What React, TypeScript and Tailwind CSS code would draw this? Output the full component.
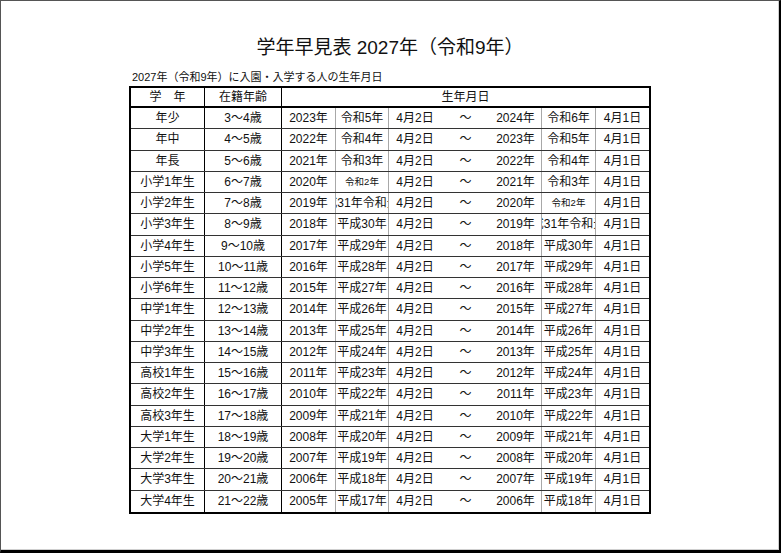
import React from "react";

type Row = {
  grade: string;
  age: string;
  fromYear: string;
  fromEra: string;
  toYear: string;
  toEra: string;
};

const rows: Row[] = [
  { grade: "年少", age: "3～4歳", fromYear: "2023年", fromEra: "令和5年", toYear: "2024年", toEra: "令和6年" },
  { grade: "年中", age: "4～5歳", fromYear: "2022年", fromEra: "令和4年", toYear: "2023年", toEra: "令和5年" },
  { grade: "年長", age: "5～6歳", fromYear: "2021年", fromEra: "令和3年", toYear: "2022年", toEra: "令和4年" },
  { grade: "小学1年生", age: "6～7歳", fromYear: "2020年", fromEra: "令和2年", toYear: "2021年", toEra: "令和3年" },
  { grade: "小学2年生", age: "7～8歳", fromYear: "2019年", fromEra: "平成31年令和元年", toYear: "2020年", toEra: "令和2年" },
  { grade: "小学3年生", age: "8～9歳", fromYear: "2018年", fromEra: "平成30年", toYear: "2019年", toEra: "平成31年令和元年" },
  { grade: "小学4年生", age: "9～10歳", fromYear: "2017年", fromEra: "平成29年", toYear: "2018年", toEra: "平成30年" },
  { grade: "小学5年生", age: "10～11歳", fromYear: "2016年", fromEra: "平成28年", toYear: "2017年", toEra: "平成29年" },
  { grade: "小学6年生", age: "11～12歳", fromYear: "2015年", fromEra: "平成27年", toYear: "2016年", toEra: "平成28年" },
  { grade: "中学1年生", age: "12～13歳", fromYear: "2014年", fromEra: "平成26年", toYear: "2015年", toEra: "平成27年" },
  { grade: "中学2年生", age: "13～14歳", fromYear: "2013年", fromEra: "平成25年", toYear: "2014年", toEra: "平成26年" },
  { grade: "中学3年生", age: "14～15歳", fromYear: "2012年", fromEra: "平成24年", toYear: "2013年", toEra: "平成25年" },
  { grade: "高校1年生", age: "15～16歳", fromYear: "2011年", fromEra: "平成23年", toYear: "2012年", toEra: "平成24年" },
  { grade: "高校2年生", age: "16～17歳", fromYear: "2010年", fromEra: "平成22年", toYear: "2011年", toEra: "平成23年" },
  { grade: "高校3年生", age: "17～18歳", fromYear: "2009年", fromEra: "平成21年", toYear: "2010年", toEra: "平成22年" },
  { grade: "大学1年生", age: "18～19歳", fromYear: "2008年", fromEra: "平成20年", toYear: "2009年", toEra: "平成21年" },
  { grade: "大学2年生", age: "19～20歳", fromYear: "2007年", fromEra: "平成19年", toYear: "2008年", toEra: "平成20年" },
  { grade: "大学3年生", age: "20～21歳", fromYear: "2006年", fromEra: "平成18年", toYear: "2007年", toEra: "平成19年" },
  { grade: "大学4年生", age: "21～22歳", fromYear: "2005年", fromEra: "平成17年", toYear: "2006年", toEra: "平成18年" },
];

function EraCell({ text, className }: { text: string; className: string }) {
  const small = text === "令和2年";
  return (
    <div className={`${className} flex items-center justify-center overflow-hidden whitespace-nowrap`}>
      <span className={small ? "text-[9.5px]" : ""}>{text}</span>
    </div>
  );
}

export default function App() {
  return (
    <div className="w-[781px] h-[553px] bg-white border-t border-l border-[#555] border-r-2 border-r-black border-b-[3px] border-b-black shadow-[inset_-1px_-1px_0_#cfcfcf] font-['Liberation_Sans','Noto_Sans_CJK_JP',sans-serif] text-[#111]">
      <div className="pt-[33px] h-[61px] text-center text-[19px] leading-[28px]">
        学年早見表 2027年（令和9年）
      </div>
      <div className="mt-[8px] pl-[131px] text-[11px] leading-[14px]">
        2027年（令和9年）に入園・入学する人の生年月日
      </div>
      <div className="mt-[2px] ml-[128px] w-[522px] border-2 border-black text-[12px] leading-none">
        <div className="flex h-[20px] border-b-2 border-black">
          <div className="w-[74px] border-r border-black flex items-center justify-center">学　年</div>
          <div className="w-[77px] border-r border-black flex items-center justify-center">在籍年齢</div>
          <div className="flex-1 flex items-center justify-center">生年月日</div>
        </div>
        {rows.map((r, i) => (
          <div
            key={r.grade}
            className={`flex h-[21.25px] ${i < rows.length - 1 ? "border-b border-[#333]" : ""}`}
          >
            <div className="w-[74px] border-r border-black flex items-center justify-center">{r.grade}</div>
            <div className="w-[77px] border-r border-black flex items-center justify-center">{r.age}</div>
            <div className="w-[54px] border-r border-[#a8a8a8] flex items-center justify-center">{r.fromYear}</div>
            <EraCell text={r.fromEra} className="w-[53px] border-r border-[#a8a8a8]" />
            <div className="w-[52px] flex items-center justify-center">4月2日</div>
            <div className="w-[49px] flex items-center justify-center">～</div>
            <div className="w-[52px] border-r border-[#a8a8a8] flex items-center justify-center">{r.toYear}</div>
            <EraCell text={r.toEra} className="w-[54px] border-r border-[#a8a8a8]" />
            <div className="w-[53px] flex items-center justify-center">4月1日</div>
          </div>
        ))}
      </div>
    </div>
  );
}
